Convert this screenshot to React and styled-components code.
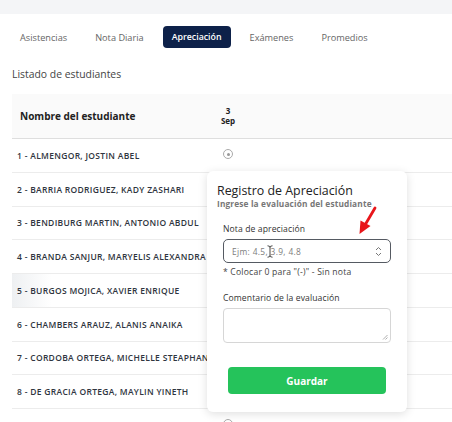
import React from 'react';
import styled, { createGlobalStyle } from 'styled-components';

const Global = createGlobalStyle`
  html, body { margin: 0; padding: 0; background: #fff; }
  body { font-family: "Open Sans", "Noto Sans", sans-serif; color: #333; overflow: hidden; }
`;

const tabs = ['Asistencias', 'Nota Diaria', 'Apreciación', 'Exámenes', 'Promedios'];
const students = [
  '1 - ALMENGOR, JOSTIN ABEL',
  '2 - BARRIA RODRIGUEZ, KADY ZASHARI',
  '3 - BENDIBURG MARTIN, ANTONIO ABDUL',
  '4 - BRANDA SANJUR, MARYELIS ALEXANDRA',
  '5 - BURGOS MOJICA, XAVIER ENRIQUE',
  '6 - CHAMBERS ARAUZ, ALANIS ANAIKA',
  '7 - CORDOBA ORTEGA, MICHELLE STEAPHANIE',
  '8 - DE GRACIA ORTEGA, MAYLIN YINETH',
  '',
];

const Page = styled.div`
  position: relative;
  width: 452px;
  height: 422px;
  overflow: hidden;
`;

const TopStrip = styled.div`
  height: 14px;
  background: #f4f5f7;
`;

const TabBar = styled.div`
  display: flex;
  align-items: center;
  gap: 10px;
  padding: 12px 0 0 11px;
`;

const Tab = styled.div`
  height: 22px;
  display: flex;
  align-items: center;
  padding: 0 9px;
  border-radius: 4px;
  font-size: ${p => (p.$active ? 8.8 : 9.2)}px;
  font-weight: ${p => (p.$active ? 600 : 500)};
  color: ${p => (p.$active ? '#fff' : '#666')};
  background: ${p => (p.$active ? '#0d2149' : 'transparent')};
`;

const Heading = styled.div`
  margin: 19px 0 0 12px;
  font-size: 10.4px;
  color: #444;
`;

const Table = styled.div`
  margin: 13px 0 0 12px;
`;

const HeadRow = styled.div`
  display: grid;
  grid-template-columns: 198px 36px 1fr;
  height: 44px;
  align-items: center;
  background: #fafafa;
  border-bottom: 1px solid #dedede;
`;

const HeadName = styled.div`
  padding-left: 8px;
  font-size: 10px;
  font-weight: 700;
  color: #222;
`;

const HeadDate = styled.div`
  text-align: center;
  font-size: 8px;
  font-weight: 700;
  line-height: 10px;
  color: #222;
`;

const Row = styled.div`
  display: grid;
  grid-template-columns: 198px 36px 1fr;
  height: 33.75px;
  box-sizing: border-box;
  align-items: center;
  border-bottom: 1px solid #ececec;
  background: ${p => (p.$hover ? 'linear-gradient(90deg, #eef0f2 0px, #fff 40px)' : '#fff')};
`;

const Name = styled.div`
  padding-left: 5px;
  font-size: 8.5px;
  letter-spacing: 0.3px;
  font-weight: 600;
  color: #2f3540;
  white-space: nowrap;
`;

const Radio = styled.div`
  justify-self: center;
  align-self: start;
  margin-top: 10px;
  width: 8px;
  height: 8px;
  border: 1px solid #aaa;
  border-radius: 50%;
  display: flex;
  align-items: center;
  justify-content: center;
  &::after {
    content: '';
    width: 3px;
    height: 3px;
    border-radius: 50%;
    background: #999;
  }
`;

const Popover = styled.div`
  position: absolute;
  z-index: 2;
  left: 207px;
  top: 171px;
  width: 200px;
  height: 241px;
  box-sizing: border-box;
  background: #fff;
  border-radius: 6px;
  box-shadow: 0 2px 10px rgba(0, 0, 0, 0.13);
  padding: 12px 10px 0 10px;
`;

const Title = styled.div`
  font-size: 12.4px;
  color: #222;
  line-height: 15px;
`;

const Sub = styled.div`
  font-size: 8.3px;
  font-weight: 700;
  letter-spacing: 0.15px;
  color: #777;
`;

const Form = styled.div`
  padding: 0 6px;
  display: flex;
  flex-direction: column;
`;

const Label = styled.div`
  font-size: 8.6px;
  letter-spacing: 0.1px;
  color: #333;
  margin-top: ${p => p.$top}px;
  margin-bottom: 4px;
`;

const InputBox = styled.div`
  position: relative;
  height: 24px;
  box-sizing: border-box;
  border: 1.5px solid #555a62;
  border-radius: 5px;
  display: flex;
  align-items: center;
  padding: 0 8px;
  font-size: 8.4px;
  letter-spacing: 0.35px;
  color: #7c7c7c;
`;

const Spin = styled.svg`
  margin-left: auto;
`;

const Caret = styled.svg`
  position: absolute;
  left: 43px;
  top: 5px;
`;

const Hint = styled.div`
  font-size: 8.6px;
  letter-spacing: 0.2px;
  color: #444;
  margin-top: 3px;
`;

const TextArea = styled.div`
  position: relative;
  height: 35px;
  box-sizing: border-box;
  border: 1px solid #d6d6d6;
  border-radius: 4px;
`;

const Grip = styled.svg`
  position: absolute;
  right: 2px;
  bottom: 2px;
`;

const SaveButton = styled.button`
  margin: 24px 5px 0 5px;
  height: 27px;
  border: none;
  border-radius: 4px;
  background: #25c35b;
  color: #fff;
  font-family: inherit;
  font-size: 10px;
  font-weight: 700;
`;

const Arrow = styled.svg`
  position: absolute;
  z-index: 3;
  left: 355px;
  top: 206px;
`;

export default function App() {
  return (
    <Page>
      <Global />
      <TopStrip />
      <TabBar>
        {tabs.map((t, i) => (
          <Tab key={t} $active={i === 2}>{t}</Tab>
        ))}
      </TabBar>
      <Heading>Listado de estudiantes</Heading>
      <Table>
        <HeadRow>
          <HeadName>Nombre del estudiante</HeadName>
          <HeadDate>3<br />Sep</HeadDate>
          <div />
        </HeadRow>
        {students.map((s, i) => (
          <Row key={i} $hover={i === 4}>
            <Name>{s}</Name>
            {i === 0 || i === 8 ? <Radio /> : <div />}
            <div />
          </Row>
        ))}
      </Table>
      <Popover>
        <Title>Registro de Apreciación</Title>
        <Sub>Ingrese la evaluación del estudiante</Sub>
        <Form>
          <Label $top={14}>Nota de apreciación</Label>
          <InputBox>
            Ejm: 4.5, 3.9, 4.8
            <Caret width="6" height="13" viewBox="0 0 6 13">
              <path d="M0.5 0.8 Q3 0.8 3 2.5 L3 10.5 Q3 12.2 0.5 12.2 M5.5 0.8 Q3 0.8 3 2.5 M3 10.5 Q3 12.2 5.5 12.2" stroke="#333" strokeWidth="0.9" fill="none" />
            </Caret>
            <Spin width="7" height="11" viewBox="0 0 7 11">
              <path d="M1 4 L3.5 1.5 L6 4 M1 7 L3.5 9.5 L6 7" stroke="#777" strokeWidth="1" fill="none" />
            </Spin>
          </InputBox>
          <Hint>* Colocar 0 para "(-)" - Sin nota</Hint>
          <Label $top={14}>Comentario de la evaluación</Label>
          <TextArea>
            <Grip width="6" height="6" viewBox="0 0 6 6">
              <path d="M5.5 1 L1 5.5 M5.5 3.5 L3.5 5.5" stroke="#999" strokeWidth="0.8" />
            </Grip>
          </TextArea>
          <SaveButton>Guardar</SaveButton>
        </Form>
      </Popover>
      <Arrow width="24" height="30" viewBox="0 0 24 30">
        <path d="M20 2 L10 19" stroke="#e8161b" strokeWidth="2.8" strokeLinecap="round" />
        <path d="M4.5 28 L5.5 14.5 L15.5 20 Z" fill="#e8161b" />
      </Arrow>
    </Page>
  );
}
